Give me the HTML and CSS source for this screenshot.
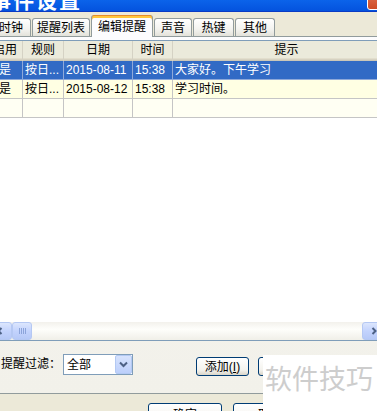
FILE: index.html
```html
<!DOCTYPE html>
<html lang="zh-CN">
<head>
    <meta charset="UTF-8">
    <title>事件设置</title>
    <link rel="stylesheet" href="styles.css">
</head>
<body>
    <div class="window">
        <div class="titlebar">
            <span class="title">事件设置</span>
            <span class="close"></span>
        </div>
        <div class="tabs">
            <div class="tab w40">时钟</div>
            <div class="tab">提醒列表</div>
            <div class="tab active">编辑提醒</div>
            <div class="tab w38">声音</div>
            <div class="tab w41">热键</div>
            <div class="tab w40">其他</div>
        </div>
        <div class="page">
            <div class="list">
                <div class="grid">
                    <div class="head">启用</div>
                    <div class="head">规则</div>
                    <div class="head">日期</div>
                    <div class="head">时间</div>
                    <div class="head">提示</div>

                    <div class="cell sel first">是</div>
                    <div class="cell sel">按日...</div>
                    <div class="cell sel">2015-08-11</div>
                    <div class="cell sel">15:38</div>
                    <div class="cell sel">大家好。下午学习</div>

                    <div class="cell odd first">是</div>
                    <div class="cell odd">按日...</div>
                    <div class="cell odd">2015-08-12</div>
                    <div class="cell odd">15:38</div>
                    <div class="cell odd">学习时间。</div>

                    <div class="cell blank first"></div>
                    <div class="cell blank"></div>
                    <div class="cell blank"></div>
                    <div class="cell blank"></div>
                    <div class="cell blank"></div>
                </div>
                <div class="hscroll">
                    <span class="sbtn">
                        <svg width="8" height="8" viewBox="0 0 8 8"><path d="M5.5 1 L2.5 4 L5.5 7" fill="none" stroke="#4D6185" stroke-width="2"/></svg>
                    </span>
                    <span class="thumb"><i></i><i></i><i></i><i></i></span>
                    <span class="track"></span>
                    <span class="sbtn">
                        <svg width="8" height="8" viewBox="0 0 8 8"><path d="M2.5 1 L5.5 4 L2.5 7" fill="none" stroke="#4D6185" stroke-width="2"/></svg>
                    </span>
                </div>
            </div>
            <div class="filter">
                <span class="label">提醒过滤：</span>
                <div class="select">
                    <span class="value">全部</span>
                    <span class="drop">
                        <svg width="9" height="7" viewBox="0 0 9 7"><path d="M1 1.5 L4.5 5 L8 1.5" fill="none" stroke="#4D6185" stroke-width="2"/></svg>
                    </span>
                </div>
                <button class="btn add">添加(<u>I</u>)</button>
                <button class="btn del">删除(<u>D</u>)</button>
            </div>
        </div>
        <div class="footer">
            <button class="btn wide">确定</button>
            <button class="btn wide">取消</button>
        </div>
        <div class="watermark">软件技巧</div>
    </div>
</body>
</html>
```

FILE: styles.css
```css
body, html {
    margin: 0;
    padding: 0;
}
body {
    width: 377px;
    height: 411px;
    overflow: hidden;
    background: #ECE9D8;
    font: 12px/1 "Liberation Sans", "Noto Sans CJK SC", sans-serif;
    color: #000;
}
.window {
    position: relative;
    margin-left: -20px;
    width: 420px;
    height: 411px;
    display: flex;
    flex-direction: column;
}

/* title bar */
.titlebar {
    flex: none;
    height: 11px;
    border-bottom: 1px solid #0A3BC4;
    background: linear-gradient(#0B63EA, #0453DE);
    overflow: hidden;
    display: flex;
    justify-content: space-between;
}
.title {
    margin: -11px 0 0 10px;
    color: #fff;
    font: bold 21px/21px "Noto Sans CJK SC", sans-serif;
    letter-spacing: 2px;
}
.close {
    width: 19px;
    height: 19px;
    margin: -11px 12px 0 0;
    border: 1px solid #fff;
    border-radius: 3px;
    background: linear-gradient(#E37A5B, #CF4B25);
}

/* tabs */
.tabs {
    flex: none;
    height: 24px;
    display: flex;
    align-items: flex-end;
    gap: 1px;
    padding-left: 11px;
}
.tab {
    height: 18px;
    box-sizing: border-box;
    padding: 0 4px;
    border: 1px solid #919B9C;
    border-bottom: none;
    border-radius: 3px 3px 0 0;
    background: linear-gradient(#FFFFFF, #F3F3EF 60%, #E3E2DA);
    display: flex;
    align-items: center;
    justify-content: center;
    line-height: 12px;
}
.tab.w38 { width: 38px; }
.tab.w40 { width: 40px; }
.tab.w41 { width: 41px; }
.tab.active {
    position: relative;
    z-index: 1;
    width: 62px;
    height: 22px;
    margin-bottom: -1px;
    padding-top: 1px;
    border-top: none;
    background: #FCFCFE;
    box-shadow: inset 0 1px #E68B2C, inset 0 3px #FFC83C;
}

/* tab page */
.page {
    flex: none;
    height: 358px;
    box-sizing: border-box;
    margin-left: 4px;
    padding: 3px 0 0 2px;
    border: 1px solid #919B9C;
    border-right: none;
    background: linear-gradient(#FCFCFE, #F4F3EE 40%, #F2F1EA);
}
.list {
    width: 400px;
    height: 301px;
    box-sizing: border-box;
    border: 1px solid #7F9DB9;
    background: #fff;
    display: flex;
    flex-direction: column;
}
.grid {
    flex: 1;
    overflow: hidden;
    display: grid;
    grid-template-columns: 35px 41px 69px 40px 228px;
    grid-template-rows: 20px;
    grid-auto-rows: 19px;
    align-content: start;
}
.head {
    box-sizing: border-box;
    padding-bottom: 3px;
    border-right: 1px solid #D5D2C4;
    background: #EBEADB;
    box-shadow: inset 0 -1px #CBC7B8, inset 0 -2px #D6D2C2, inset 0 -3px #E2DECD;
    display: flex;
    align-items: center;
    justify-content: center;
}
.cell {
    box-sizing: border-box;
    padding-left: 2px;
    border-right: 1px solid #C5C5C5;
    border-bottom: 1px solid #C5C5C5;
    display: flex;
    align-items: center;
    white-space: nowrap;
    overflow: hidden;
}
.cell.first {
    padding-left: 11px;
}
.cell.sel {
    background: #316AC5;
    color: #fff;
    border-right-color: #8FA9D9;
    border-bottom-color: #8FA9D9;
}
.cell.odd {
    background: #FFFFE3;
}
.cell.blank {
    background: #FFFFF3;
}

/* horizontal scrollbar */
.hscroll {
    flex: none;
    height: 18px;
    display: flex;
    background: linear-gradient(#F3F1EC, #FEFEFB 40%, #F0EFE8);
}
.sbtn, .thumb {
    box-sizing: border-box;
    border: 1px solid #B5C8F3;
    border-radius: 3px;
    background: linear-gradient(#DCE6FD, #C3D3FD 50%, #B6C9F7);
    display: flex;
    align-items: center;
    justify-content: center;
}
.sbtn {
    width: 24px;
}
.thumb {
    width: 20px;
    gap: 1px;
}
.thumb i {
    width: 1px;
    height: 6px;
    background: #8CA4DA;
}
.track {
    flex: 1;
}

/* filter row */
.filter {
    height: 52px;
    box-sizing: border-box;
    padding: 13px 0 0 14px;
    display: flex;
    align-items: flex-start;
}
.label {
    line-height: 21px;
}
.select {
    width: 70px;
    height: 21px;
    box-sizing: border-box;
    margin-left: 2px;
    border: 1px solid #7F9DB9;
    background: #fff;
    display: flex;
    justify-content: space-between;
    align-items: center;
}
.value {
    padding-left: 3px;
}
.drop {
    width: 17px;
    height: 19px;
    box-sizing: border-box;
    border: 1px solid #B3C9F3;
    border-radius: 2px;
    background: linear-gradient(#D7E3FD, #BCCFFB);
    display: flex;
    align-items: center;
    justify-content: center;
}
.btn {
    height: 19px;
    box-sizing: border-box;
    padding: 0;
    border: 1px solid #003C74;
    border-radius: 3px;
    background: linear-gradient(#FFFFFF, #F4F3EE 70%, #D9D5C9);
    font: 12px/1 "Liberation Sans", "Noto Sans CJK SC", sans-serif;
    color: #000;
}
.btn u {
    text-decoration: underline;
}
.btn.add {
    width: 53px;
    margin: 3px 0 0 63px;
}
.btn.del {
    width: 53px;
    margin: 3px 0 0 9px;
}

/* footer */
.footer {
    flex: 1;
    padding: 9px 0 0 168px;
    display: flex;
    align-items: flex-start;
    gap: 11px;
}
.btn.wide {
    flex: none;
    width: 74px;
    height: 23px;
}

.watermark {
    position: absolute;
    left: 283px;
    top: 355px;
    width: 140px;
    height: 56px;
    box-sizing: border-box;
    padding: 7px 0 0 2px;
    background: #fff;
    color: #CDCDCD;
    font: 27px/32px "Noto Sans CJK SC", sans-serif;
}
```
